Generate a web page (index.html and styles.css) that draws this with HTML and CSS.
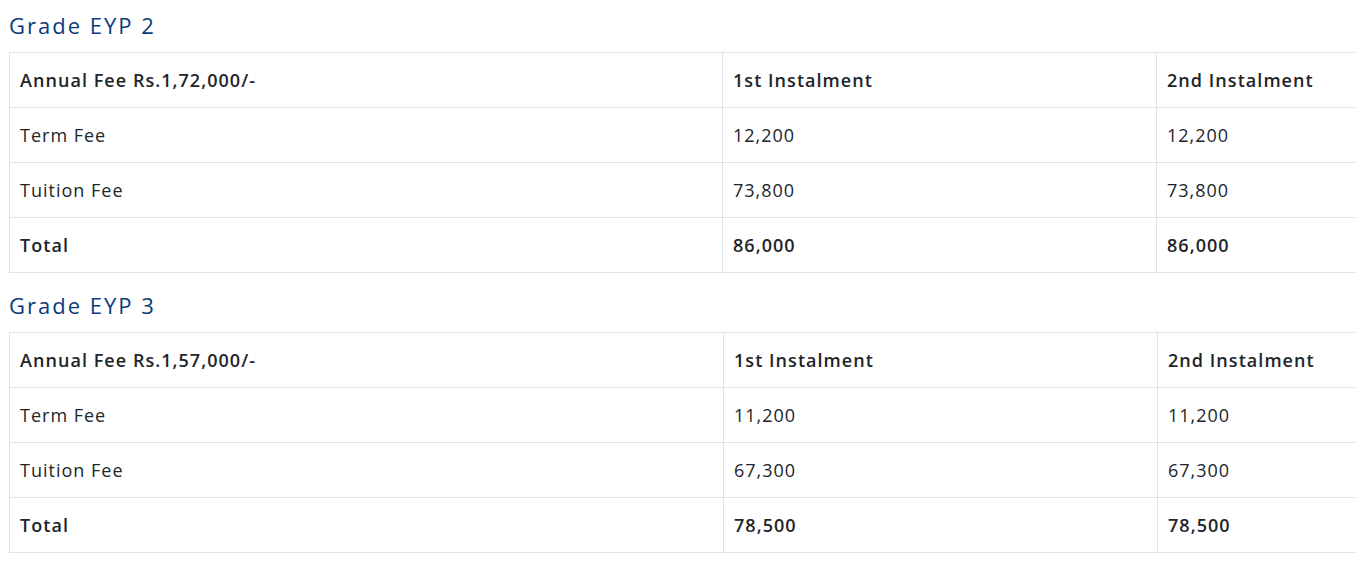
FILE: index.html
```html
<!DOCTYPE html>
<html>
<head>
<meta charset="utf-8">
<link rel="stylesheet" href="styles.css">
</head>
<body>
<div class="page">
  <section class="fee">
    <h4 class="grade">Grade EYP 2</h4>
    <table class="fees">
      <colgroup><col class="c1"><col class="c2"><col class="c3"></colgroup>
      <tr class="head"><td>Annual Fee Rs.1,72,000/-</td><td>1st Instalment</td><td>2nd Instalment</td></tr>
      <tr><td>Term Fee</td><td>12,200</td><td>12,200</td></tr>
      <tr><td>Tuition Fee</td><td>73,800</td><td>73,800</td></tr>
      <tr class="total"><td>Total</td><td>86,000</td><td>86,000</td></tr>
    </table>
  </section>
  <section class="fee">
    <h4 class="grade">Grade EYP 3</h4>
    <table class="fees wide">
      <colgroup><col class="c1"><col class="c2"><col class="c3"></colgroup>
      <tr class="head"><td>Annual Fee Rs.1,57,000/-</td><td>1st Instalment</td><td>2nd Instalment</td></tr>
      <tr><td>Term Fee</td><td>11,200</td><td>11,200</td></tr>
      <tr><td>Tuition Fee</td><td>67,300</td><td>67,300</td></tr>
      <tr class="total"><td>Total</td><td>78,500</td><td>78,500</td></tr>
    </table>
  </section>
</div>
</body>
</html>
```
FILE: styles.css
```css
html, body { margin: 0; padding: 0; background: #fff; }
body { overflow: hidden; }
.page {
  padding: 9px 0 0 9px;
  font-family: "Open Sans", "Liberation Sans", sans-serif;
  color: #212529;
}
.fee + .fee { margin-top: 16px; }
.grade {
  margin: 0 0 10px;
  font-size: 22px;
  line-height: 33px;
  font-weight: 400;
  letter-spacing: 2px;
  color: #0b3b78;
}
.fees {
  border-collapse: collapse;
  table-layout: fixed;
  width: 1600px;
}
.c1 { width: 713px; }
.c2 { width: 434px; }
.c3 { width: 453px; }
.wide .c1 { width: 714px; }
.fees td {
  border: 1px solid #dee2e6;
  padding: 15px 10px;
  height: 24px;
  line-height: 24px;
  font-size: 18px;
  font-weight: 400;
  letter-spacing: 1px;
}
.fees .head td, .fees .total td { font-weight: 600; letter-spacing: 1.05px; }
```
